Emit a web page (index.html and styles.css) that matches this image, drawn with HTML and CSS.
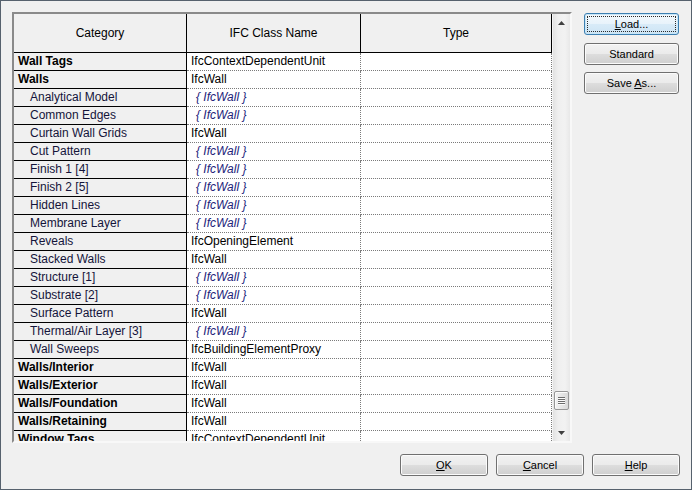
FILE: index.html
```html
<!DOCTYPE html>
<html>
<head>
<meta charset="utf-8">
<link rel="stylesheet" href="styles.css">
</head>
<body>
<div class="dialog">
  <div class="top">
    <div class="frame">
      <div class="grid">
        <div class="hcell">Category</div>
        <div class="hcell">IFC Class Name</div>
        <div class="hcell">Type</div>

        <div class="cat b">Wall Tags</div><div class="ifc">IfcContextDependentUnit</div><div class="typ"></div>
        <div class="cat b">Walls</div><div class="ifc">IfcWall</div><div class="typ"></div>
        <div class="cat s">Analytical Model</div><div class="ifc inh">{ IfcWall }</div><div class="typ"></div>
        <div class="cat s">Common Edges</div><div class="ifc inh">{ IfcWall }</div><div class="typ"></div>
        <div class="cat s">Curtain Wall Grids</div><div class="ifc">IfcWall</div><div class="typ"></div>
        <div class="cat s">Cut Pattern</div><div class="ifc inh">{ IfcWall }</div><div class="typ"></div>
        <div class="cat s">Finish 1 [4]</div><div class="ifc inh">{ IfcWall }</div><div class="typ"></div>
        <div class="cat s">Finish 2 [5]</div><div class="ifc inh">{ IfcWall }</div><div class="typ"></div>
        <div class="cat s">Hidden Lines</div><div class="ifc inh">{ IfcWall }</div><div class="typ"></div>
        <div class="cat s">Membrane Layer</div><div class="ifc inh">{ IfcWall }</div><div class="typ"></div>
        <div class="cat s">Reveals</div><div class="ifc">IfcOpeningElement</div><div class="typ"></div>
        <div class="cat s">Stacked Walls</div><div class="ifc">IfcWall</div><div class="typ"></div>
        <div class="cat s">Structure [1]</div><div class="ifc inh">{ IfcWall }</div><div class="typ"></div>
        <div class="cat s">Substrate [2]</div><div class="ifc inh">{ IfcWall }</div><div class="typ"></div>
        <div class="cat s">Surface Pattern</div><div class="ifc">IfcWall</div><div class="typ"></div>
        <div class="cat s">Thermal/Air Layer [3]</div><div class="ifc inh">{ IfcWall }</div><div class="typ"></div>
        <div class="cat s">Wall Sweeps</div><div class="ifc">IfcBuildingElementProxy</div><div class="typ"></div>
        <div class="cat b">Walls/Interior</div><div class="ifc">IfcWall</div><div class="typ"></div>
        <div class="cat b">Walls/Exterior</div><div class="ifc">IfcWall</div><div class="typ"></div>
        <div class="cat b">Walls/Foundation</div><div class="ifc">IfcWall</div><div class="typ"></div>
        <div class="cat b">Walls/Retaining</div><div class="ifc">IfcWall</div><div class="typ"></div>
        <div class="cat b">Window Tags</div><div class="ifc">IfcContextDependentUnit</div><div class="typ"></div>
      </div>
      <div class="scrollbar">
        <div class="arrow">
          <svg width="7" height="4" viewBox="0 0 7 4"><polygon points="3.5,0 7,4 0,4" fill="#404040"/></svg>
        </div>
        <div class="track"></div>
        <div class="thumb">
          <span class="grip"></span><span class="grip"></span><span class="grip"></span><span class="grip"></span>
        </div>
        <div class="track-end"></div>
        <div class="arrow">
          <svg width="7" height="4" viewBox="0 0 7 4"><polygon points="0,0 7,0 3.5,4" fill="#404040"/></svg>
        </div>
      </div>
    </div>
    <div class="side">
      <button class="btn default"><span class="focus"><span><u>L</u>oad...</span></span></button>
      <button class="btn"><span>Standard</span></button>
      <button class="btn"><span>Save <u>A</u>s...</span></button>
    </div>
  </div>
  <div class="bottom">
    <button class="btn wide"><span><u>O</u>K</span></button>
    <button class="btn wide"><span><u>C</u>ancel</span></button>
    <button class="btn wide"><span><u>H</u>elp</span></button>
  </div>
</div>
</body>
</html>
```

FILE: styles.css
```css
* { box-sizing: border-box; }

html, body {
  margin: 0;
  padding: 0;
  background: #f0f0f0;
}

.dialog {
  width: 692px;
  height: 490px;
  border: 1px solid #56616d;
  background: #f0f0f0;
  display: flex;
  flex-direction: column;
  font-family: "Liberation Sans", Arial, sans-serif;
  font-size: 12px;
  color: #000;
}

.top {
  display: flex;
  align-items: flex-start;
  padding: 11px 0 0 11px;
}

.frame {
  width: 560px;
  height: 431px;
  border: 2px solid;
  border-color: #8a8a8a #f8f8f8 #f8f8f8 #8a8a8a;
  display: flex;
  overflow: hidden;
  background: #fff;
}

.grid {
  width: 538px;
  height: 427px;
  display: grid;
  grid-template-columns: 173px 174px 191px;
  grid-template-rows: 39px;
  grid-auto-rows: 18px;
  align-content: start;
  overflow: hidden;
}

.hcell {
  background: #f0f0f0;
  border-right: 1px solid #000;
  border-bottom: 1px solid #000;
  display: flex;
  align-items: center;
  justify-content: center;
  padding-top: 1px;
  line-height: 17px;
}

.cat {
  background: #f0f0f0;
  border-right: 1px solid #000;
  border-bottom: 1px solid #000;
  line-height: 17px;
  padding-left: 4px;
  white-space: nowrap;
  overflow: hidden;
}

.cat.b { font-weight: bold; }
.cat.s { padding-left: 16px; color: #14143a; }

.ifc, .typ {
  background: #fff;
  border-right: 1px dotted #7a7a7a;
  border-bottom: 1px dotted #7a7a7a;
  line-height: 17px;
  padding-left: 4px;
  white-space: nowrap;
  overflow: hidden;
}

.ifc.inh {
  font-style: italic;
  color: #23237a;
  padding-left: 9px;
}

.scrollbar {
  width: 18px;
  height: 427px;
  display: flex;
  flex-direction: column;
  align-items: center;
  background: linear-gradient(to right, #e2e2e2, #efefef 30%, #f2f2f2 70%, #e8e8e8);
  border-left: 1px solid #f4f4f4;
}

.arrow {
  height: 17px;
  width: 100%;
  display: flex;
  align-items: center;
  justify-content: center;
}

.track { flex: 1; }
.track-end { height: 14px; }

.thumb {
  width: 15px;
  height: 19px;
  border: 1px solid #979797;
  border-radius: 2px;
  background: linear-gradient(to right, #f4f4f4, #e6e6e6 50%, #d9d9d9);
  box-shadow: inset 1px 1px 0 #fbfbfb;
  display: flex;
  flex-direction: column;
  align-items: center;
  justify-content: center;
  gap: 1px;
}

.grip {
  display: block;
  width: 7px;
  height: 1px;
  background: #6c6c6c;
  box-shadow: 0 1px 0 #fafafa;
}

.side {
  display: flex;
  flex-direction: column;
  gap: 8px;
  margin-left: 12px;
  margin-top: 1px;
}

.btn {
  font-family: "Liberation Sans", Arial, sans-serif;
  font-size: 11px;
  color: #000;
  width: 95px;
  height: 22px;
  padding: 0;
  border: 1px solid #707070;
  border-radius: 3px;
  background: linear-gradient(#f2f2f2 0%, #ebebeb 48%, #dddddd 52%, #cfcfcf 100%);
  box-shadow: inset 0 0 0 1px #fbfbfb;
  display: flex;
  align-items: center;
  justify-content: center;
  line-height: 13px;
}

.side .btn:nth-child(3) { margin-top: -1px; }

.btn.default {
  border-color: #3c7fb1;
  background: linear-gradient(#f3f9fd 0%, #e8f3fb 48%, #d8ebf8 52%, #cde4f4 100%);
  box-shadow: inset 0 0 0 1px #c7e5f7;
  padding: 2px;
}

.focus {
  flex: 1;
  align-self: stretch;
  display: flex;
  align-items: center;
  justify-content: center;
  border: 1px dotted #2a2a2a;
}

u { text-decoration: underline; text-underline-offset: 1px; }

.bottom {
  display: flex;
  justify-content: flex-end;
  gap: 8px;
  padding: 11px 11px 0 0;
}

.btn.wide { width: 88px; }
```
